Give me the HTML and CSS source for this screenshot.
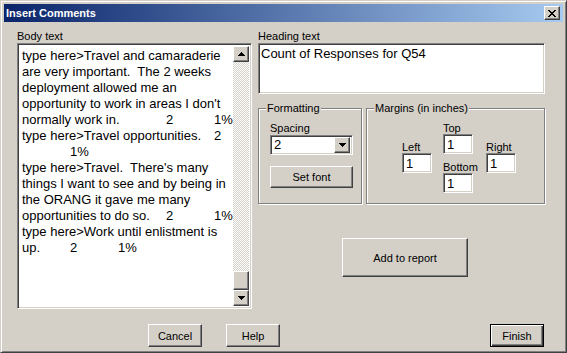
FILE: index.html
```html
<!DOCTYPE html>
<html lang="en">
<head>
  <meta charset="UTF-8">
  <title>Insert Comments</title>
  <link rel="stylesheet" href="styles.css">
</head>
<body>
  <div class="window">
    <div class="titlebar">
      <span class="title">Insert Comments</span>
      <button class="close-btn">
        <svg width="8" height="7" viewBox="0 0 8 7" shape-rendering="crispEdges"><path d="M0 0h2v1h1v1h2V1h1V0h2v1H7v1H6v1H5v1h1v1h1v1h1v1H6V6H5V5H3v1H2v1H0V6h1V5h1V4h1V3H2V2H1V1H0z"/></svg>
      </button>
    </div>

    <div class="dialog">
      <div class="columns">
        <div class="col-left">
          <div class="label">Body text</div>
          <div class="sunken body-field">
            <div class="body-text">type here&gt;Travel and camaraderie
are very important.  The 2 weeks
deployment allowed me an
opportunity to work in areas I don't
normally work in.  	2	1%
type here&gt;Travel opportunities.  	2
	1%
type here&gt;Travel.  There's many
things I want to see and by being in
the ORANG it gave me many
opportunities to do so.  	2	1%
type here&gt;Work until enlistment is
up.  	2	1%</div>
            <div class="scrollbar">
              <div class="raised sb-btn">
                <svg width="7" height="4" viewBox="0 0 7 4" shape-rendering="crispEdges"><path d="M3 0h1v1h1v1h1v1h1v1H0V3h1V2h1V1h1z"/></svg>
              </div>
              <div class="sb-track"></div>
              <div class="raised sb-thumb"></div>
              <div class="raised sb-btn">
                <svg width="7" height="4" viewBox="0 0 7 4" shape-rendering="crispEdges"><path d="M0 0h7v1H6v1H5v1H4v1H3V3H2V2H1V1H0z"/></svg>
              </div>
            </div>
          </div>
        </div>

        <div class="col-right">
          <div class="label">Heading text</div>
          <div class="sunken heading-field">Count of Responses for Q54</div>

          <div class="groups">
            <div class="group formatting">
              <div class="group-title">Formatting</div>
              <div class="group-body">
                <div class="label small">Spacing</div>
                <div class="sunken combo">
                  <span class="combo-value">2</span>
                  <span class="raised combo-btn">
                    <svg width="7" height="4" viewBox="0 0 7 4" shape-rendering="crispEdges"><path d="M0 0h7v1H6v1H5v1H4v1H3V3H2V2H1V1H0z"/></svg>
                  </span>
                </div>
                <button class="btn set-font">Set font</button>
              </div>
            </div>

            <div class="group margins">
              <div class="group-title">Margins (in inches)</div>
              <div class="group-body margin-grid">
                <div class="margin-col side">
                  <div class="label small">Left</div>
                  <div class="sunken num">1</div>
                </div>
                <div class="margin-col">
                  <div class="label small">Top</div>
                  <div class="sunken num">1</div>
                  <div class="label small bottom-label">Bottom</div>
                  <div class="sunken num">1</div>
                </div>
                <div class="margin-col side right-col">
                  <div class="label small">Right</div>
                  <div class="sunken num">1</div>
                </div>
              </div>
            </div>
          </div>

          <button class="btn add-report">Add to report</button>
        </div>
      </div>

      <div class="actions">
        <button class="btn cancel">Cancel</button>
        <button class="btn help">Help</button>
        <button class="btn default finish">Finish</button>
      </div>
    </div>
  </div>
</body>
</html>
```

FILE: styles.css
```css
body {
  margin: 0;
  background: #3a6ea5;
  font-family: "Liberation Sans", Arial, sans-serif;
  font-size: 11px;
  color: #000;
}

.window {
  width: 567px;
  height: 353px;
  box-sizing: border-box;
  background: #d4d0c8;
  border: 1px solid;
  border-color: #d4d0c8 #404040 #404040 #d4d0c8;
  box-shadow: inset 1px 1px #fff, inset -1px -1px #808080;
  padding: 3px;
}

/* Title bar */
.titlebar {
  height: 18px;
  display: flex;
  align-items: center;
  padding-left: 2px;
  background: linear-gradient(to right, #0a246a, #a6caf0);
}

.title {
  flex: 1;
  color: #fff;
  font-weight: bold;
  font-size: 11px;
  line-height: 18px;
}

.close-btn {
  width: 16px;
  height: 14px;
  margin-right: 3px;
  padding: 0;
  display: flex;
  align-items: center;
  justify-content: center;
  background: #d4d0c8;
  border: 1px solid;
  border-color: #fff #404040 #404040 #fff;
  box-shadow: inset -1px -1px #808080;
}

/* 3D borders */
.sunken {
  box-sizing: border-box;
  background: #fff;
  border: 1px solid;
  border-color: #808080 #fff #fff #808080;
  box-shadow: inset 1px 1px #404040, inset -1px -1px #d4d0c8;
}

.raised {
  box-sizing: border-box;
  background: #d4d0c8;
  border: 1px solid;
  border-color: #fff #404040 #404040 #fff;
  box-shadow: inset -1px -1px #808080;
}

.btn {
  box-sizing: border-box;
  padding: 0;
  background: #d4d0c8;
  font-family: "Liberation Sans", Arial, sans-serif;
  font-size: 11px;
  color: #000;
  border: 1px solid;
  border-color: #fff #404040 #404040 #fff;
  box-shadow: inset -1px -1px #808080;
}

.btn.default {
  border-color: #000;
  box-shadow: inset 1px 1px #fff, inset -1px -1px #404040, inset -2px -2px #808080;
}

/* Dialog body */
.dialog {
  padding: 8px 0 0 13px;
}

.columns {
  display: grid;
  grid-template-columns: 235px 287px;
  column-gap: 6px;
}

.label {
  line-height: 13px;
}

.label.small {
  line-height: 12px;
}

/* Body text box */
.body-field {
  height: 266px;
  display: flex;
  padding: 2px;
}

.body-text {
  flex: 1;
  padding: 2px 0 0 2px;
  font-size: 13px;
  line-height: 16px;
  white-space: pre;
  tab-size: 48px;
  overflow: hidden;
}

.scrollbar {
  width: 16px;
  display: flex;
  flex-direction: column;
}

.sb-btn {
  height: 16px;
  display: flex;
  align-items: center;
  justify-content: center;
}

.sb-track {
  flex: 1;
  background: repeating-conic-gradient(#fff 0 25%, #d4d0c8 0 50%) 0 0 / 2px 2px;
}

.sb-thumb {
  height: 19px;
}

/* Heading box */
.heading-field {
  height: 51px;
  padding: 2px 2px;
  font-size: 13px;
  line-height: 16px;
}

/* Group boxes */
.groups {
  display: flex;
  gap: 4px;
  margin-top: 14px;
}

.group {
  box-sizing: border-box;
  border: 1px solid #808080;
  box-shadow: 1px 1px #fff, inset 1px 1px #fff;
  padding-bottom: 10px;
}

.group-title {
  width: fit-content;
  margin: -7px 0 0 7px;
  padding: 0 1px;
  line-height: 13px;
  background: #d4d0c8;
}

.group-body {
  padding-top: 7px;
}

.formatting {
  width: 104px;
}

.formatting .group-body {
  padding-left: 11px;
}

.combo {
  width: 83px;
  height: 20px;
  margin-top: 1px;
  display: flex;
  align-items: center;
  padding: 2px;
}

.combo-value {
  flex: 1;
  padding-left: 1px;
  font-size: 13px;
  line-height: 16px;
}

.combo-btn {
  width: 16px;
  height: 16px;
  display: flex;
  align-items: center;
  justify-content: center;
}

.set-font {
  display: block;
  width: 83px;
  height: 22px;
  margin-top: 11px;
}

.margins {
  width: 179px;
}

.margin-grid {
  display: flex;
  gap: 11px;
  padding-left: 35px;
}

.margin-col {
  width: 30px;
}

.margin-col.side {
  padding-top: 19px;
}

.right-col {
  margin-left: 2px;
}

.bottom-label {
  margin-top: 7px;
}

.num {
  width: 30px;
  height: 20px;
  padding: 2px 0 0 3px;
  font-size: 13px;
  line-height: 16px;
}

.add-report {
  display: block;
  width: 126px;
  height: 39px;
  margin: 34px 0 0 84px;
}

/* Bottom buttons */
.actions {
  display: flex;
  margin-top: 15px;
}

.actions .btn {
  width: 54px;
  height: 23px;
}

.cancel {
  margin-left: 131px;
}

.help {
  margin-left: 24px;
}

.finish {
  margin-left: 210px;
}
```
